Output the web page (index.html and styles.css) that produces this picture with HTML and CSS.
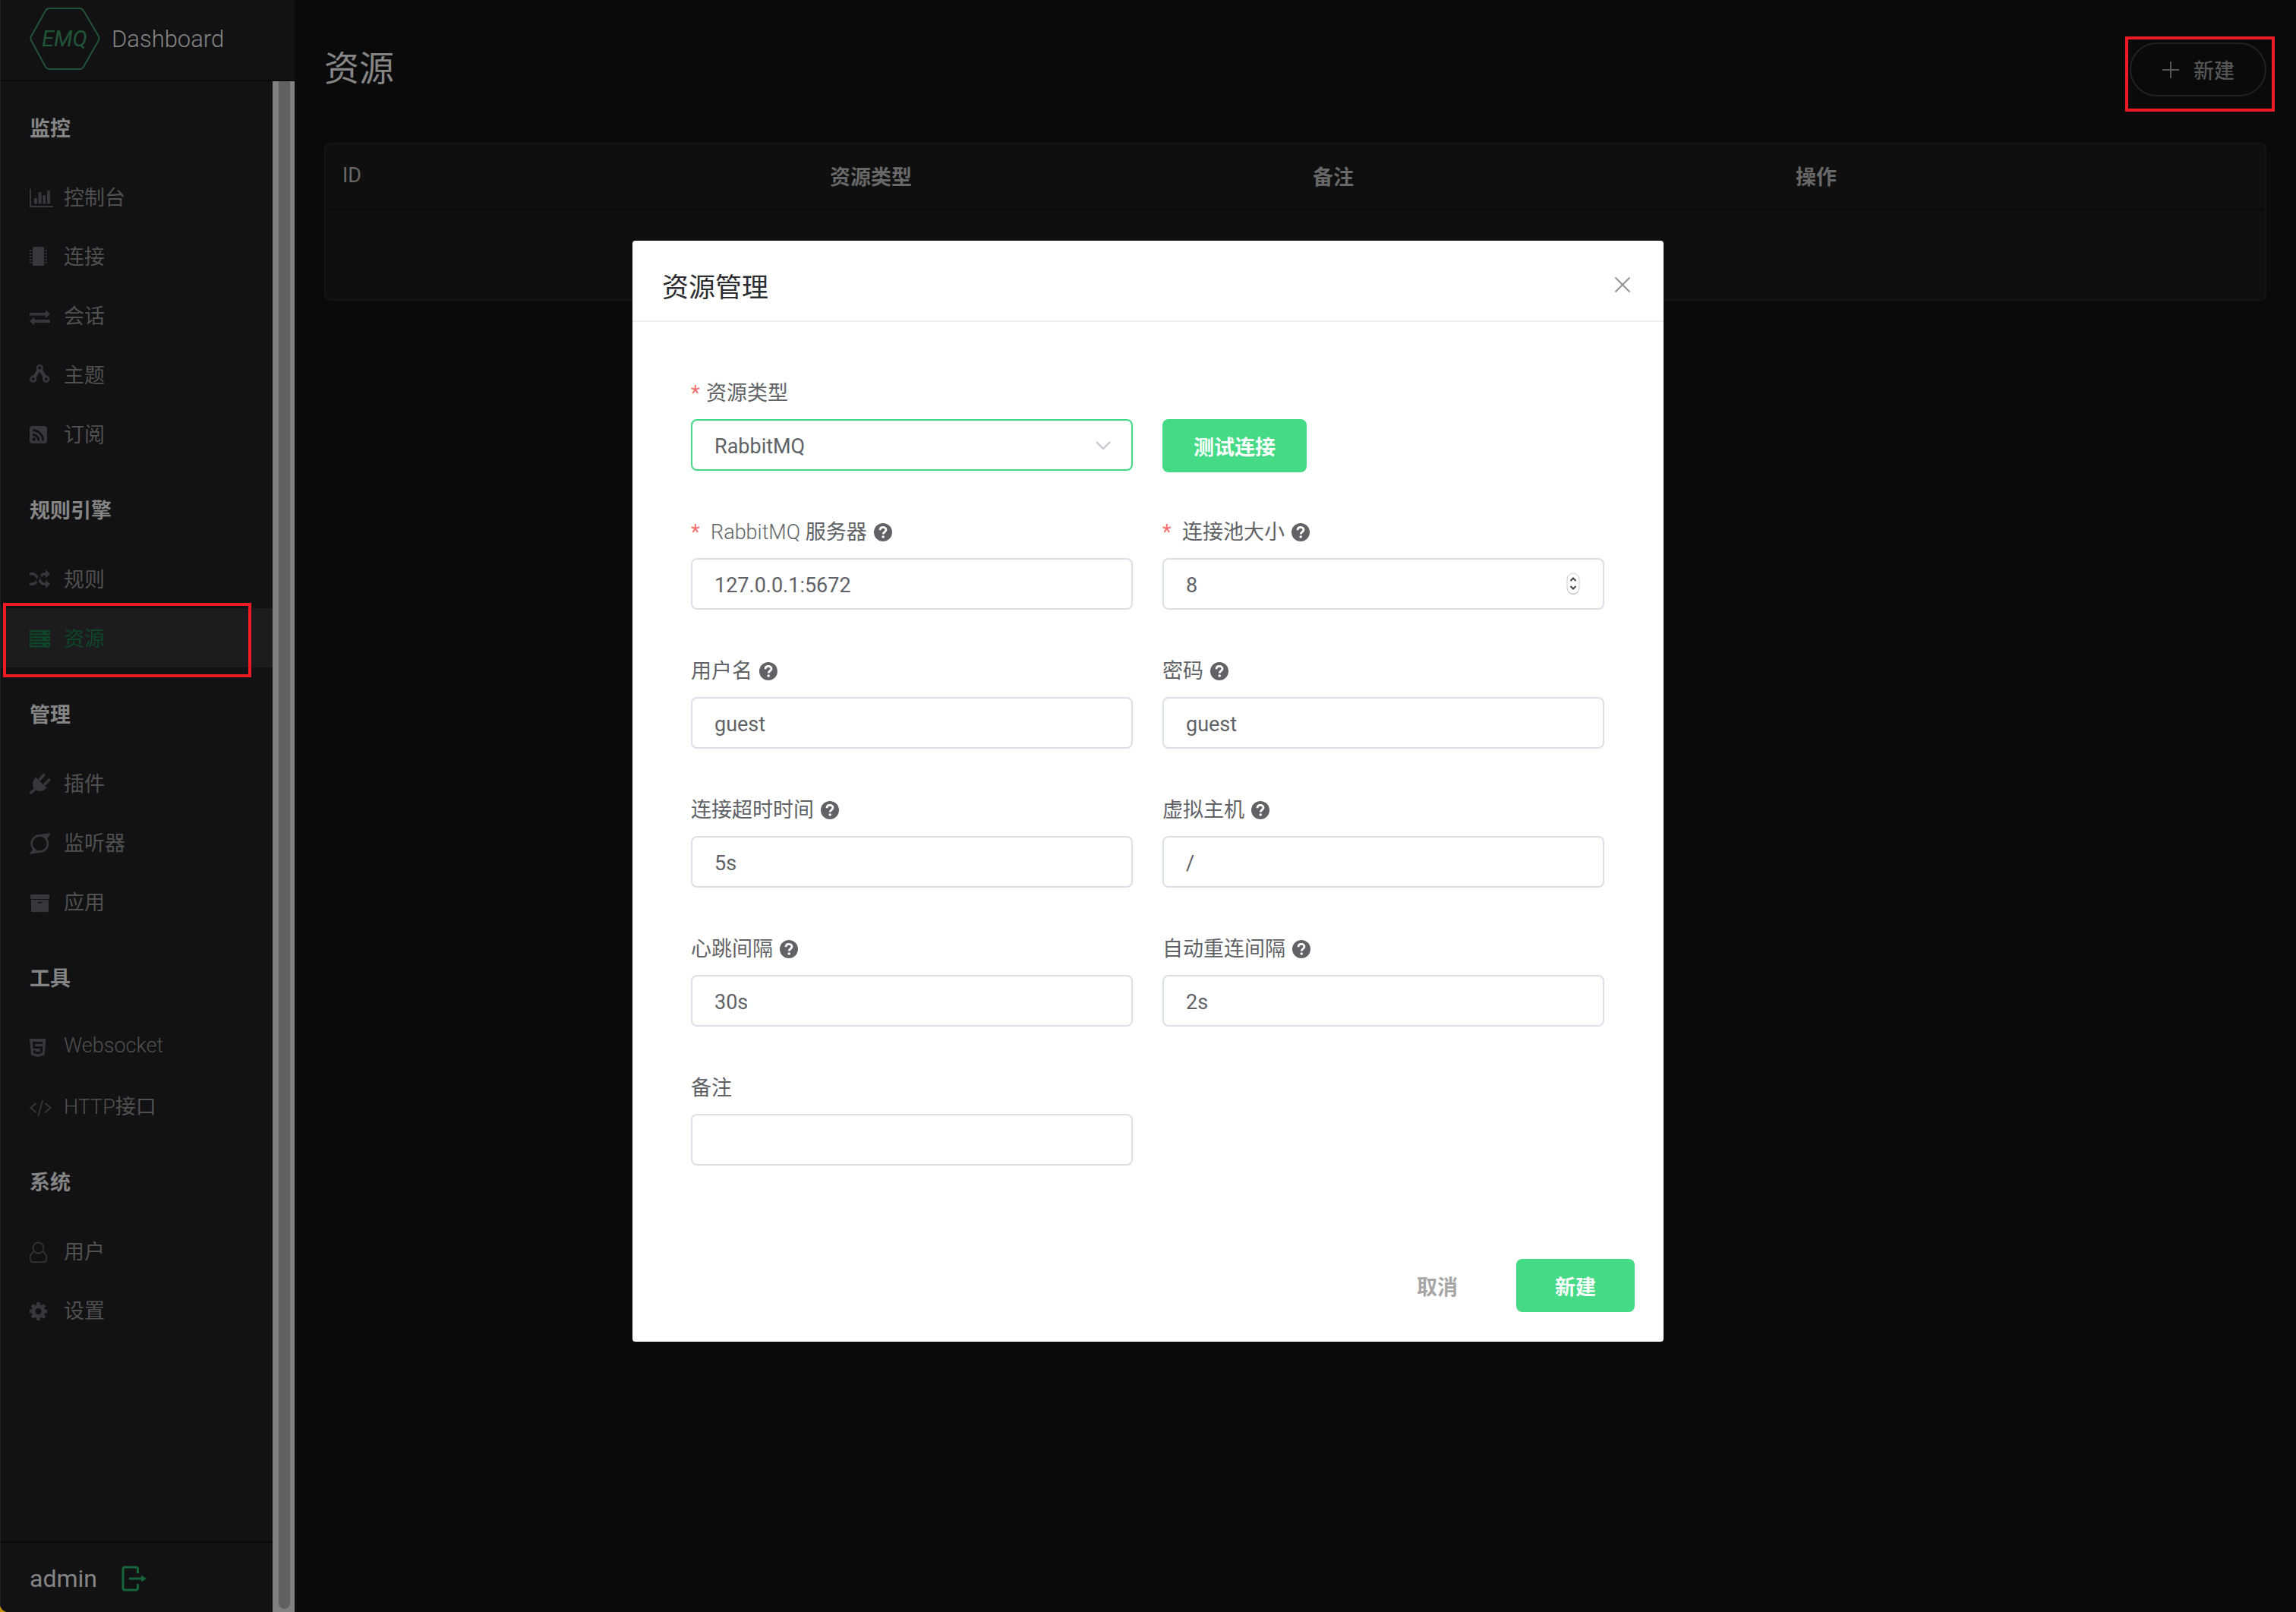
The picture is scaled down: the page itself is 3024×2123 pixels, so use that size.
FILE: index.html
```html
<!DOCTYPE html>
<html lang="zh-CN">
<head>
<meta charset="utf-8">
<title>EMQ Dashboard</title>
<link rel="stylesheet" href="styles.css">
</head>
<body>
<svg class="defs" aria-hidden="true">
  <symbol id="help" viewBox="0 0 24 24"><circle cx="12" cy="12" r="12" fill="currentColor"/><path d="M8 9.2C8 6.6 9.800 5.300 12 5.300s4 1.400 4 3.500c0 2.600-3.800 3-3.800 5.600" fill="none" stroke="#fff" stroke-width="2.800"/><circle cx="12.200" cy="18" r="1.800" fill="#fff"/></symbol>
</svg>
<div class="layout">
  <aside class="sidebar">
    <a class="brand" href="#">
      <svg class="brand-logo" viewBox="0 0 94 84" aria-hidden="true">
        <path d="M26 2h40q3 0 5 3l20 34q1 3 0 5L71 79q-2 3-5 3H26q-3 0-5-3L2 44q-1-2 0-5L21 5q2-3 5-3z" fill="none" stroke="#215536" stroke-width="2"/>
        <text class="brand-mark" x="46" y="52" text-anchor="middle">EMQ</text>
      </svg>
      <span>Dashboard</span>
    </a>
    <div class="sidebar-body">
      <div class="sidebar-column">
        <nav class="menu">
          <h2 class="menu-title">监控</h2>
          <ul class="menu-list">
            <li><a class="menu-item" href="#"><svg class="menu-icon" viewBox="0 0 32 32"><path d="M0 4h2v22h29v2H0zM6 16h4v7.500H6zM11.500 8h4v15.500h-4zM17.500 12H21v11.500h-3.500zM23 6h4v17.500h-4z"/></svg>控制台</a></li>
            <li><a class="menu-item" href="#"><svg class="menu-icon" viewBox="0 0 32 32"><rect x="4" y="2" width="15" height="25" rx="1.500"/><path d="M0 6h3v1.500H0zM0 10h3v1.500H0zM0 14h3v1.500H0zM0 18h3v1.500H0zM0 22h3v1.500H0zM20 6h3v1.500h-3zM20 10h3v1.500h-3zM20 14h3v1.500h-3zM20 18h3v1.500h-3zM20 22h3v1.500h-3z"/></svg>连接</a></li>
            <li><a class="menu-item" href="#"><svg class="menu-icon" viewBox="0 0 32 32"><path d="M0 11h21V7l6 5.500-6 5.500v-3.500H0zM27 20H6v-3.500L0 22l6 5.500V24h21z"/></svg>会话</a></li>
            <li><a class="menu-item" href="#"><svg class="menu-icon" viewBox="0 0 32 32"><path d="M11.800 8.500 6.500 17.500M14.800 8.500 20 17.500" stroke="currentColor" stroke-width="4.500"/><g fill="none" stroke="currentColor" stroke-width="2.600"><circle cx="13.300" cy="5.500" r="3.300"/><circle cx="4.700" cy="20.200" r="3.300"/><circle cx="21.700" cy="20.200" r="3.300"/></g></svg>主题</a></li>
            <li><a class="menu-item" href="#"><svg class="menu-icon" viewBox="0 0 32 32"><rect y="4" width="23" height="23" rx="4"/><g class="cut-line"><path d="M4 15.500a8 8 0 0 1 8 8M4 9.800A13.700 13.700 0 0 1 17.700 23.500"/></g><circle class="cut" cx="5.800" cy="21.500" r="2.200"/></svg>订阅</a></li>
          </ul>
          <h2 class="menu-title">规则引擎</h2>
          <ul class="menu-list">
            <li><a class="menu-item" href="#"><svg class="menu-icon" viewBox="0 0 32 32"><path d="M0 7.700h4c7 0 8.500 13.600 15.500 13.600H22M0 21.300h4c7 0 8.500-13.600 15.500-13.600H22" fill="none" stroke="currentColor" stroke-width="3.600"/><path class="cut-line" d="M9.500 18.500 14.200 9.500" stroke-width="1"/><path d="M21 2l6 5.700-6 5.700zM21 15.600l6 5.700-6 5.700z"/></svg>规则</a></li>
            <li class="menu-current"><a class="menu-item active" href="#" aria-current="page"><svg class="menu-icon" viewBox="0 0 32 32"><path fill-rule="evenodd" d="M0 4h27v6.500H0zM2 6.300v2h15v-2zM0 12h27v6.500H0zM2 14.300v2h15v-2zM0 20h27v6.500H0zM2 22.300v2h15v-2zM22.500 6.300v2h2.500v-2zM22.500 14.300v2h2.500v-2zM22.500 22.300v2h2.500v-2z"/></svg>资源</a><span class="marker marker-menu"></span></li>
          </ul>
          <h2 class="menu-title">管理</h2>
          <ul class="menu-list">
            <li><a class="menu-item" href="#"><svg class="menu-icon" viewBox="0 0 32 32"><path d="M8 6.500 22.500 20.500C18 25.500 12.500 26 8.500 23.500L2.500 29Q0 29.500 0 26.500L5.500 21C3 16.500 4 11 8 6.500z"/><path d="M13.500 9.500 18.800 3.500M20 16l5.600-6" stroke="currentColor" stroke-width="3.600" stroke-linecap="round"/></svg>插件</a></li>
            <li><a class="menu-item" href="#"><svg class="menu-icon" viewBox="0 0 32 32"><circle cx="13.300" cy="16" r="10.600" fill="none" stroke="currentColor" stroke-width="2.600"/><path d="M11 4.500 27 2C26 6 25 8 22 9.500 19 6 16 5 11 4.500zM16 27.500 0 30C1 27 3 25.500 5 23 8 26 11 27 16 27.500z"/></svg>监听器</a></li>
            <li><a class="menu-item" href="#"><svg class="menu-icon" viewBox="0 0 32 32"><rect x="1" y="5" width="25" height="6" rx="1"/><path fill-rule="evenodd" d="M2 12h23v15q0 1-1 1H3q-1 0-1-1zM10.500 15v1.500h6V15z"/></svg>应用</a></li>
          </ul>
          <h2 class="menu-title">工具</h2>
          <ul class="menu-list">
            <li><a class="menu-item" href="#"><svg class="menu-icon" viewBox="0 0 32 32"><path d="M0 4h21.500l-2 21.500-8.700 2.500L2 25.500z"/><path class="cut-line" d="M17.200 9.500H5.500l.5 6h9.800l-.6 6.200-4.500 1.300-4.300-1.300-.2-2.500" stroke-width="2.400"/></svg><span class="latin">Websocket</span></a></li>
            <li><a class="menu-item" href="#"><svg class="menu-icon" viewBox="0 0 32 32"><path d="M8.500 11 1.500 17l7 6M20.500 11l7 6-7 6M17 7l-5.500 20.500" fill="none" stroke="currentColor" stroke-width="1.800"/></svg><span><span class="latin">HTTP</span>接口</span></a></li>
          </ul>
          <h2 class="menu-title">系统</h2>
          <ul class="menu-list">
            <li><a class="menu-item" href="#"><svg class="menu-icon" viewBox="0 0 32 32"><g fill="none" stroke="currentColor" stroke-width="1.600"><circle cx="11.500" cy="10.500" r="7"/><path d="M5.500 15.500C2 17 .8 20 .8 24.500c0 3 1.700 4.700 4.200 4.700h13c2.500 0 4.200-1.700 4.200-4.700 0-4.500-1.200-7.500-4.700-9"/></g></svg>用户</a></li>
            <li><a class="menu-item" href="#"><svg class="menu-icon" viewBox="0 0 32 32"><circle cx="11.500" cy="16" r="6.500" fill="none" stroke="currentColor" stroke-width="5"/><path d="M11.500 4v4.500M11.500 23.500V28M0 16h4.500M18.500 16H23M3.200 7.700l3.300 3.300M16.500 21l3.300 3.300M19.800 7.700 16.500 11M6.500 21l-3.300 3.300" stroke="currentColor" stroke-width="4.600"/></svg>设置</a></li>
          </ul>
        </nav>
        <div class="account">
          <span>admin</span>
          <button class="logout" type="button" aria-label="退出">
            <svg viewBox="0 0 34 34" aria-hidden="true"><path d="M21.500 10V4.500q0-2.500-2.500-2.500H4.500Q2 2 2 4.500v25Q2 32 4.500 32H19q2.500 0 2.500-2.500V24M10 17h18" fill="none" stroke="currentColor" stroke-width="3"/><path d="M26 12.500 33 17l-7 4.500z" fill="currentColor"/></svg>
          </button>
        </div>
      </div>
      <div class="scrollbar"><div class="scrollbar-thumb"></div></div>
    </div>
  </aside>

  <main class="content">
    <header class="page-head">
      <h1 class="page-title">资源</h1>
      <div class="create-wrap">
        <button class="create" type="button"><svg viewBox="0 0 24 24" aria-hidden="true"><path d="M12 1v22M1 12h22" stroke="currentColor" stroke-width="2"/></svg>新建</button>
        <span class="marker marker-create"></span>
      </div>
    </header>
    <div class="table-card">
      <table class="table">
        <colgroup><col class="col-first"><col class="col-next"><col class="col-next"><col></colgroup>
        <thead><tr><th class="th-latin">ID</th><th>资源类型</th><th>备注</th><th>操作</th></tr></thead>
        <tbody><tr><td colspan="4"></td></tr></tbody>
      </table>
    </div>
  </main>
</div>

<div class="overlay">
  <section class="dialog" role="dialog" aria-labelledby="dialog-title">
    <header class="dialog-head">
      <h2 class="dialog-title" id="dialog-title">资源管理</h2>
      <button class="close" type="button" aria-label="关闭"><svg viewBox="0 0 22 22" aria-hidden="true"><path d="M1.500 1.500l19 19M20.500 1.500l-19 19" stroke="currentColor" stroke-width="2"/></svg></button>
    </header>
    <form class="form">
      <div class="field">
        <label class="label" for="type"><span class="required">*</span>资源类型</label>
        <div class="control">
          <select class="input focused" id="type"><option>RabbitMQ</option></select>
          <svg class="arrow" viewBox="0 0 20 12" aria-hidden="true"><path d="M1 1l9 9 9-9" fill="none" stroke="currentColor" stroke-width="2"/></svg>
        </div>
      </div>
      <div class="field field-action"><button class="btn primary test" type="button">测试连接</button></div>
      <div class="field">
        <label class="label" for="server"><span class="required wide">*</span><span><span class="latin">RabbitMQ</span> 服务器</span><svg class="help"><use href="#help"/></svg></label>
        <input class="input" id="server" type="text" value="127.0.0.1:5672">
      </div>
      <div class="field">
        <label class="label" for="pool"><span class="required wide">*</span>连接池大小<svg class="help"><use href="#help"/></svg></label>
        <div class="control">
          <input class="input" id="pool" type="number" value="8">
          <svg class="stepper" viewBox="0 0 18 30" aria-hidden="true"><rect x="1" y="2" width="16" height="27" rx="8" fill="#bbb"/><rect x="1" y="1" width="16" height="27" rx="8" fill="#fff" stroke="#ccc"/><path d="M5.500 11 9 7.500l3.500 3.500M5.500 18 9 21.500l3.500-3.500" fill="none" stroke="#444" stroke-width="2"/></svg>
        </div>
      </div>
      <div class="field">
        <label class="label" for="user">用户名<svg class="help"><use href="#help"/></svg></label>
        <input class="input" id="user" type="text" value="guest">
      </div>
      <div class="field">
        <label class="label" for="pass">密码<svg class="help"><use href="#help"/></svg></label>
        <input class="input" id="pass" type="text" value="guest">
      </div>
      <div class="field">
        <label class="label" for="timeout">连接超时时间<svg class="help"><use href="#help"/></svg></label>
        <input class="input" id="timeout" type="text" value="5s">
      </div>
      <div class="field">
        <label class="label" for="vhost">虚拟主机<svg class="help"><use href="#help"/></svg></label>
        <input class="input" id="vhost" type="text" value="/">
      </div>
      <div class="field">
        <label class="label" for="heartbeat">心跳间隔<svg class="help"><use href="#help"/></svg></label>
        <input class="input" id="heartbeat" type="text" value="30s">
      </div>
      <div class="field">
        <label class="label" for="reconnect">自动重连间隔<svg class="help"><use href="#help"/></svg></label>
        <input class="input" id="reconnect" type="text" value="2s">
      </div>
      <div class="field">
        <label class="label" for="note">备注</label>
        <input class="input" id="note" type="text">
      </div>
    </form>
    <footer class="dialog-foot">
      <button class="btn plain" type="button">取消</button>
      <button class="btn primary" type="button">新建</button>
    </footer>
  </section>
</div>
</body>
</html>
```
FILE: styles.css
```css
* { box-sizing: border-box; }

body {
  margin: 0;
  background: #0a0a0a;
  color: #606266;
  font-family: Roboto, "Noto Sans CJK SC", sans-serif;
  font-size: 27px;
}

h1, h2, ul { margin: 0; padding: 0; }
ul { list-style: none; }
a { color: inherit; text-decoration: none; }
svg { display: block; flex: none; }
button, input, select { font: inherit; color: inherit; }
button { border: 0; padding: 0; background: none; cursor: pointer; }

.defs { position: absolute; width: 0; height: 0; }
.latin { font-weight: 300; }

.layout {
  display: flex;
  min-height: 100vh;
  background: linear-gradient(45deg, #c8930a 6px, transparent 6px);
}

/* sidebar */
.sidebar {
  display: flex;
  flex-direction: column;
  flex: none;
  width: 388px;
  background: #121214;
  border-left: 1px solid #222224;
  border-bottom-left-radius: 10px;
}

.brand {
  display: flex;
  align-items: center;
  gap: 14px;
  height: 107px;
  padding: 0 0 3px 38px;
  border-bottom: 2px solid #0a0a0b;
  color: #858585;
  font-size: 31px;
  font-weight: 300;
}
.brand-logo { width: 94px; height: 84px; }
.brand-mark { font-size: 29px; font-style: italic; font-weight: 400; fill: #215536; }

.sidebar-body { display: flex; flex: 1; }
.sidebar-column { display: flex; flex-direction: column; flex: 1; }

.menu { flex: 1; }
.menu-title {
  padding: 48px 38px 35px;
  color: #858585;
  font-size: 27px;
  font-weight: 700;
  line-height: 30px;
}
.menu-item {
  display: flex;
  align-items: center;
  gap: 13px;
  height: 78px;
  padding: 0 0 2px 38px;
  color: #505050;
}
.menu-icon { width: 32px; height: 32px; margin-top: 6px; color: #38383c; fill: currentColor; }
.cut { fill: #121214; }
.cut-line { fill: none; stroke: #121214; stroke-width: 3px; }
.menu-current { position: relative; }
.active { background: #1c1c1e; color: #0e4527; }
.active .menu-icon { color: #0e4527; }

.account {
  display: flex;
  align-items: center;
  gap: 32px;
  height: 93px;
  padding: 3px 0 0 38px;
  border-top: 2px solid #0a0a0b;
  color: #858585;
  font-size: 32px;
}
.logout { color: #15663a; }
.logout svg { width: 34px; height: 34px; }

.scrollbar { display: flex; width: 29px; padding: 0 6px 4px 8px; background: #808080; }
.scrollbar-thumb { flex: 1; border-radius: 0 0 8px 8px; background: #606060; }

/* frames that call out the steps */
.marker { position: absolute; border: 4px solid #ed1c24; pointer-events: none; }
.marker-menu { top: -7px; left: 3px; width: 327px; height: 98px; }
.marker-create { top: -8px; right: -11px; bottom: -20px; left: -6px; }

/* content */
.content { flex: 1; padding: 56px 39px 39px; }
.page-head { display: flex; justify-content: space-between; align-items: flex-start; margin-bottom: 61px; }
.page-title { color: #858585; font-size: 46px; font-weight: 400; line-height: 68px; }
.create-wrap { position: relative; }
.create {
  display: flex;
  align-items: center;
  justify-content: center;
  gap: 18px;
  width: 180px;
  height: 71px;
  border: 2px solid #222224;
  border-radius: 36px;
  color: #555555;
  font-weight: 500;
}
.create svg { width: 24px; height: 24px; }

.table-card { border: 2px solid #141414; border-radius: 8px; background: #0f0f0f; }
.table { width: 100%; border-collapse: collapse; table-layout: fixed; }
.col-first { width: 25.1%; }
.col-next { width: 24.9%; }
.table th {
  height: 86px;
  padding: 0 23px 2px;
  border-bottom: 4px solid #0b0b0b;
  color: #686868;
  font-weight: 700;
  text-align: left;
}
.table .th-latin { padding-left: 22px; font-weight: 400; }
.table td { height: 118px; padding: 0; }

/* dialog */
.overlay {
  position: fixed;
  inset: 0;
  display: flex;
  justify-content: center;
  align-items: flex-start;
  padding-top: 317px;
  overflow: auto;
}
.dialog { width: 1358px; border-radius: 4px; background: #fff; }
.dialog-head {
  display: flex;
  justify-content: space-between;
  align-items: center;
  height: 107px;
  padding: 20px 43px 0 39px;
  border-bottom: 2px solid #efefef;
}
.dialog-title { color: #2b2d30; font-size: 35px; font-weight: 400; line-height: 50px; }
.close { margin-bottom: 10px; color: #909399; }
.close svg { width: 22px; height: 22px; }

.form {
  display: grid;
  grid-template-columns: 1fr 1fr;
  gap: 60px 39px;
  padding: 73px 78px 0 77px;
}
.field { display: flex; flex-direction: column; gap: 15px; height: 123px; }
.field-action { align-items: flex-start; padding-top: 55px; }
.label { display: flex; align-items: center; height: 40px; padding-top: 2px; line-height: 38px; white-space: pre; }
.required { width: 20px; color: #f56c6c; }
.required.wide { width: 26px; }
.help { width: 24px; height: 24px; margin-left: 9px; }
.control { position: relative; }
.input {
  display: block;
  width: 100%;
  height: 68px;
  padding: 3px 29px 0;
  border: 2px solid #dcdfe6;
  border-radius: 8px;
  outline: 0;
  background: #fff;
  appearance: none;
  -moz-appearance: textfield;
}
.input::-webkit-inner-spin-button { appearance: none; margin: 0; }
.focused { border-color: #42d885; }
.arrow { position: absolute; top: 29px; right: 29px; width: 20px; height: 12px; color: #c0c4cc; }
.stepper { position: absolute; top: 19px; right: 32px; width: 18px; height: 30px; }

.btn { flex: none; height: 70px; padding: 0 51px; border-radius: 8px; font-weight: 700; }
.primary { background: #45da86; color: #fff; }
.plain { color: #a6a6a6; }
.test { padding: 0 41px; }
.dialog-foot { display: flex; justify-content: flex-end; gap: 26px; padding: 123px 38px 39px; }
```
